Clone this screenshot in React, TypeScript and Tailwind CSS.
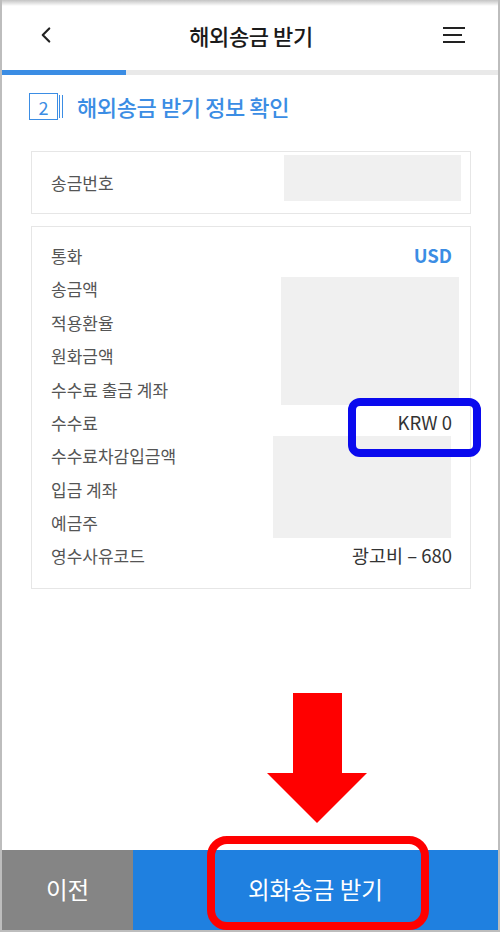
import { ChevronLeft } from 'lucide-react'

const rows: { label: string; value?: string; tone?: 'blue' | 'dark' }[] = [
  { label: '통화', value: 'USD', tone: 'blue' },
  { label: '송금액' },
  { label: '적용환율' },
  { label: '원화금액' },
  { label: '수수료 출금 계좌' },
  { label: '수수료', value: 'KRW 0', tone: 'dark' },
  { label: '수수료차감입금액' },
  { label: '입금 계좌' },
  { label: '예금주' },
  { label: '영수사유코드', value: '광고비 – 680', tone: 'dark' },
]

export default function App() {
  return (
    <div
      className="relative w-[500px] h-[932px] flex flex-col bg-white border-x-2 border-b-2 border-[#bdbdbd] overflow-hidden"
      style={{ fontFamily: '"Noto Sans CJK KR", "Noto Sans", sans-serif' }}
    >
      {/* top frame shadow */}
      <div className="absolute top-0 left-0 right-0 h-[6px] bg-gradient-to-b from-[#c4c4c4] to-white" />

      {/* Header */}
      <header className="h-[70px] shrink-0 flex items-center justify-between px-[31px]">
        <ChevronLeft className="w-[26px] h-[26px] text-[#222]" strokeWidth={2} />
        <h1 className="text-[22px] font-medium text-[#1a1a1a] tracking-[-0.4px]">해외송금 받기</h1>
        <div className="flex flex-col gap-[5px] w-[22px] mr-[2px]">
          <span className="block h-[2px] w-[22px] bg-[#222]" />
          <span className="block h-[2px] w-[19px] bg-[#222]" />
          <span className="block h-[2px] w-[22px] bg-[#222]" />
        </div>
      </header>

      {/* Progress */}
      <div className="h-[5px] shrink-0 bg-[#e9e9e9]">
        <div className="h-full w-[124px] bg-[#3b8de4]" />
      </div>

      {/* Step title */}
      <div className="flex items-center mt-[18px] ml-[27px] h-[27px]">
        <div className="w-[29px] h-[27px] border border-[#3b8de4] flex items-center justify-center text-[18px] text-[#3b8de4] leading-none">
          2
        </div>
        <span className="ml-[1px] h-[23px] w-[1px] bg-[#3b8de4]" />
        <span className="ml-[2px] h-[23px] w-[1px] bg-[#3b8de4]" />
        <h2 className="ml-[14px] text-[22px] font-medium text-[#3b8de4] tracking-[-0.4px]">
          해외송금 받기 정보 확인
        </h2>
      </div>

      {/* Card 1 */}
      <div className="mt-[31px] ml-[29px] w-[440px] h-[63px] border border-[#e6e6e6] flex justify-between pl-[19px] pr-[9px]">
        <span className="self-center text-[17px] text-[#555]">송금번호</span>
        <div className="mt-[3px] w-[177px] h-[46px] bg-[#f0f0f0]" />
      </div>

      {/* Card 2 */}
      <div className="relative mt-[12px] ml-[29px] w-[440px] border border-[#e6e6e6] pt-[12px] pb-[15px] pl-[19px] pr-[18px]">
        {rows.map((r) => (
          <div key={r.label} className="flex justify-between items-center h-[33.4px]">
            <span className="text-[17px] text-[#555]">{r.label}</span>
            {r.value && (
              <span
                className={
                  r.tone === 'blue'
                    ? 'text-[18.5px] font-bold text-[#3b8de4]'
                    : 'text-[18.5px] text-[#333]'
                }
              >
                {r.value}
              </span>
            )}
          </div>
        ))}

        {/* masked values */}
        <div className="absolute left-[249px] top-[50px] w-[178px] h-[128px] bg-[#f0f0f0]" />
        <div className="absolute left-[241px] top-[209px] w-[178px] h-[102px] bg-[#f0f0f0]" />

        {/* highlight */}
        <div className="absolute left-[316px] top-[171px] w-[133px] h-[59px] border-[8px] border-[#0a0aee] rounded-[12px]" />
      </div>

      <div className="flex-1" />

      {/* arrow annotation */}
      <svg className="absolute left-[264px] top-[693px]" width="102" height="131" viewBox="0 0 102 131">
        <path d="M27 0 H76 V80 H101 L51 130 L1 80 H27 Z" fill="#ff0000" />
      </svg>

      {/* Bottom buttons */}
      <div className="relative h-[80px] shrink-0 flex">
        <button className="w-[131px] bg-[#858585] text-white text-[23.5px]">이전</button>
        <button className="flex-1 bg-[#1f80e0] text-white text-[23.5px]">외화송금 받기</button>
      </div>

      <div className="absolute left-[205px] top-[836px] w-[222px] h-[94px] border-[8px] border-[#ff0000] rounded-[20px]" />
    </div>
  )
}
